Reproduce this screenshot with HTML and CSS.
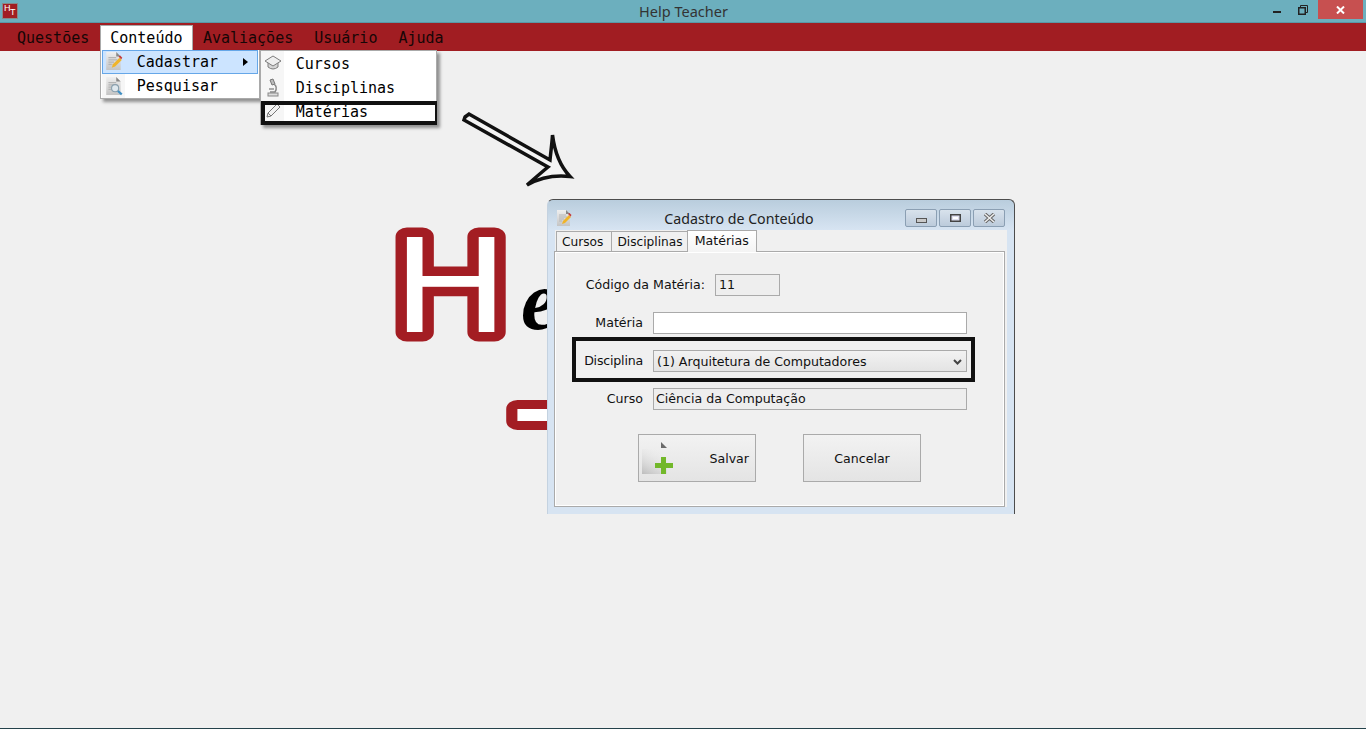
FILE: index.html
```html
<!DOCTYPE html>
<html lang="pt-BR">
<head>
	<meta charset="UTF-8">
	<title>Help Teacher</title>
	<link rel="stylesheet" href="styles.css">
</head>
<body>
	<div class="titlebar">
		<div class="app-icon"><span class="app-h">H</span><span class="app-t">T</span></div>
		<div class="app-title">Help Teacher</div>
		<div class="win-btns">
			<span class="win-btn win-min">
				<svg width="8" height="2"><rect width="8" height="2" fill="#222"/></svg>
			</span>
			<span class="win-btn">
				<svg width="10" height="10" fill="none" stroke="#222"><path d="M2.5 2.5V.5h7v7H7.5"/><rect x=".75" y="2.75" width="6.5" height="6.5" stroke-width="1.5"/></svg>
			</span>
			<span class="win-btn win-close">
				<svg width="9" height="8" stroke="#fff" stroke-width="2"><path d="M1 0.5L8 7.5M8 0.5L1 7.5"/></svg>
			</span>
		</div>
	</div>

	<ul class="menubar">
		<li class="menu-item">Questões</li>
		<li class="menu-item active">Conteúdo
			<ul class="dropdown">
				<li class="drop-item selected">
					<svg class="drop-icon doc-icon" width="20" height="20" viewBox="0 0 18 18"><use href="#doc"/><path d="M7 15l1-3 6-6 2 2-6 6z" fill="#f0b429"/><path d="M13 5l1.500-1 2 2-1 1.500z" fill="#c43c3c"/></svg>
					Cadastrar
					<span class="arrow"></span>
				</li>
				<li class="drop-item">
					<svg class="drop-icon doc-icon" width="20" height="20" viewBox="0 0 18 18"><use href="#doc"/><circle cx="10" cy="11" r="3.200" fill="#dfe8ee" stroke="#8aa0ae"/><path d="M12.500 13.500L16 16.500" stroke="#3f8fc4" stroke-width="2"/></svg>
					Pesquisar
				</li>
				<li class="submenu">
					<ul class="submenu-list">
						<li class="drop-item">
							<svg class="drop-icon" width="18" height="18" viewBox="0 0 18 18"><path d="M4 8v5q5 4 10 0V8z" fill="#d4d4d4" stroke="#7c7c7c"/><path d="M9 2L17 7l-8 5-8-5z" fill="#eee" stroke="#7c7c7c"/></svg>
							Cursos
						</li>
						<li class="drop-item">
							<svg class="drop-icon" width="18" height="20" viewBox="0 0 18 20"><path d="M6 2l3-1 2 5-3 1z" fill="#bbb" stroke="#777"/><path d="M10 6q4 3 1 8H6" fill="none" stroke="#888" stroke-width="1.500"/><rect x="4" y="15" width="10" height="3" fill="#ddd" stroke="#888"/><rect x="5" y="10" width="5" height="2" fill="#aaa"/></svg>
							Disciplinas
						</li>
						<li class="drop-item marked">
							<svg class="drop-icon" width="18" height="18" viewBox="0 0 18 18"><path d="M3 15l1-4L13 2l3 3-9 9z" fill="#f2f2f2" stroke="#777"/><path d="M4 11l3 3" stroke="#777"/></svg>
							Matérias
						</li>
					</ul>
				</li>
			</ul>
		</li>
		<li class="menu-item">Avaliações</li>
		<li class="menu-item">Usuário</li>
		<li class="menu-item">Ajuda</li>
	</ul>

	<div class="stage">
		<svg class="logo" width="170" height="314" viewBox="380 200 170 314">
			<text class="logo-letter" transform="translate(391.500 332) scale(1.2 1)">H</text>
			<text class="logo-e" x="521" y="329">e</text>
			<text class="logo-letter logo-t" transform="translate(518 514) scale(1.25 1)">T</text>
		</svg>

		<svg class="pointer" width="120" height="84" viewBox="460 108 120 84">
			<path d="M465 117L469 114L550 160C551 150 552 143 552.500 135C555 155 561 167 570 176.500C557 175 541 177 527 185C535 178 542 172 548 167L464 120Z" fill="#f4f4f4" stroke="#111" stroke-width="3.500" stroke-linejoin="miter"/>
		</svg>

		<div class="dialog">
			<div class="dialog-head">
				<svg class="dialog-icon" width="18" height="18" viewBox="0 0 18 18"><use href="#doc"/><path d="M7 15l1-3 6-6 2 2-6 6z" fill="#f0b429"/><path d="M13 5l1.500-1 2 2-1 1.500z" fill="#c43c3c"/></svg>
				<div class="dialog-title">Cadastro de Conteúdo</div>
				<div class="dialog-btns">
					<span class="dialog-btn"><svg class="icon-low" width="11" height="5"><rect x=".5" y=".5" width="10" height="4" fill="#c9c9c9" stroke="#555"/></svg></span>
					<span class="dialog-btn"><svg class="icon-high" width="11" height="8"><rect x=".75" y=".75" width="9.500" height="6.500" fill="#dde" stroke="#444" stroke-width="1.500"/><rect x="3" y="3" width="5" height="2" fill="#fff"/></svg></span>
					<span class="dialog-btn"><svg width="13" height="10"><path d="M2 1L11 9M11 1L2 9" stroke="#666" stroke-width="3.500"/><path d="M2 1L11 9M11 1L2 9" stroke="#eee" stroke-width="1.500"/></svg></span>
				</div>
			</div>
			<div class="dialog-body">
				<div class="tabs">
					<span class="tab">Cursos</span>
					<span class="tab">Disciplinas</span>
					<span class="tab current">Matérias</span>
				</div>
				<div class="panel">
					<div class="row">
						<span class="label label-auto">Código da Matéria:</span>
						<span class="field field-code">11</span>
					</div>
					<div class="row">
						<span class="label">Matéria</span>
						<span class="field field-white"></span>
					</div>
					<div class="row row-marked">
						<span class="label">Disciplina</span>
						<span class="field field-select">(1) Arquitetura de Computadores
							<svg class="chevron" width="9" height="6"><path d="M1 1l3.500 3.500L8 1" fill="none" stroke="#444" stroke-width="2"/></svg>
						</span>
					</div>
					<div class="row">
						<span class="label">Curso</span>
						<span class="field field-read">Ciência da Computação</span>
					</div>
					<div class="buttons">
						<button class="btn btn-save">
							<svg class="save-icon" width="32" height="34" viewBox="0 0 32 34">
								<defs><linearGradient id="saveDoc" x1="0" y1="1" x2="0.600" y2="0"><stop offset="0" stop-color="#bdbdbd"/><stop offset="1" stop-color="#ececec" stop-opacity="0"/></linearGradient></defs>
								<path d="M0 33V8h25v25z" fill="url(#saveDoc)"/>
								<path d="M19 1l6 6h-6z" fill="#6a6a6a"/>
								<path d="M19 16h5v6h7v5h-7v6h-5v-6h-6v-5h6z" fill="#72b82a"/>
							</svg>
							Salvar
						</button>
						<button class="btn">Cancelar</button>
					</div>
				</div>
			</div>
		</div>
	</div>

	<svg class="defs" width="0" height="0">
		<defs>
			<linearGradient id="docFill" x1="0" y1="0" x2="0" y2="1"><stop offset="0" stop-color="#efefef"/><stop offset="1" stop-color="#c4c4c4"/></linearGradient>
			<g id="doc">
				<path d="M2 1h9l4 4v12H2z" fill="url(#docFill)"/>
				<path d="M11 1l4 4h-4z" fill="#888"/>
				<path d="M4 6h7M4 8h8M4 10h5M4 12h3" stroke="#b5b5b5"/>
			</g>
		</defs>
	</svg>
</body>
</html>
```
FILE: styles.css
```css
*, *::after{
	margin: 0;
	padding: 0;
	box-sizing: border-box;
}
ul{
	list-style-type: none;
}
html, body{
	height: 100%;
	overflow: hidden;
}
body{
	display: flex;
	flex-direction: column;
	background: #f0f0f0;
	border-bottom: 1px solid #24424b;
	font-family: "DejaVu Sans", sans-serif;
}
.defs{
	position: absolute;
}

/* window title */
.titlebar{
	height: 23px;
	display: flex;
	align-items: flex-start;
	position: relative;
	background: #6cafbe;
	border-bottom: 1px solid #5a98a6;
}
.app-icon{
	width: 16px;
	height: 16px;
	margin: 3px 0 0 2px;
	background: #a11d22;
	border: 1px solid #888;
	position: relative;
	color: #fff;
	font: 9px/9px "Liberation Sans", sans-serif;
}
.app-h{
	position: absolute;
	left: 1px;
	top: 0;
}
.app-t{
	position: absolute;
	left: 7px;
	top: 4px;
}
.app-title{
	flex: 1;
	text-align: center;
	font: 14.5px/23px "Noto Sans", sans-serif;
	color: #333;
	padding-left: 83px;
}
.win-btns{
	display: flex;
	height: 19px;
	margin-right: 3px;
}
.win-btn{
	width: 30px;
	display: flex;
	align-items: center;
	justify-content: center;
}
.win-min{
	width: 22px;
	padding-top: 5px;
}
.win-close{
	width: 45px;
	background: #c75050;
}

/* menu bar */
.menubar{
	height: 28px;
	padding-left: 6.5px;
	display: flex;
	align-items: flex-end;
	background: #a11d22;
	font: 15px/26px "DejaVu Sans Mono", monospace;
	color: #160606;
	position: relative;
	z-index: 5;
}
.menu-item{
	height: 26px;
	padding: 0 9.5px;
	position: relative;
	border: 1px solid transparent;
	border-bottom: 0;
	line-height: 25px;
}
.active{
	margin-right: -0.6px;
	background: #fff;
	border-color: #aaa;
	color: #000;
}
.dropdown{
	position: absolute;
	left: -1px;
	top: 24px;
	width: 160px;
	height: 49px;
	padding-left: 1px;
	background: #fff;
	border: 1px solid #aaa;
	border-top: 0;
	box-shadow: 3px 3px 3px rgba(0,0,0,.4);
}
.drop-item{
	height: 24px;
	padding-left: 35px;
	line-height: 24px;
	position: relative;
	background: linear-gradient(to right, #f6f6f6 23px, #fff 23px);
}
.selected{
	width: 156px;
	background: #cce4ff;
	border: 1px solid #66a7e8;
	padding-left: 34px;
	line-height: 22px;
}
.submenu-list .drop-item{
	padding-top: 1px;
}
.drop-icon{
	position: absolute;
	left: 3px;
	top: 3px;
}
.doc-icon{
	top: 2px;
	left: 2px;
}
.selected .drop-icon{
	left: 1px;
	top: 0;
}
.arrow{
	position: absolute;
	right: 9px;
	top: 7px;
	border-left: 5px solid #000;
	border-top: 4px solid transparent;
	border-bottom: 4px solid transparent;
}
.submenu{
	position: absolute;
	left: 159px;
	top: 0;
}
.submenu-list{
	width: 177px;
	height: 75px;
	background: #fff;
	border: 1px solid #aaa;
	box-shadow: 3px 3px 3px rgba(0,0,0,.4);
}
.marked::after{
	content: "";
	position: absolute;
	left: 0;
	right: -1px;
	top: 2px;
	height: 24px;
	border: 4px solid #111;
	border-right-width: 2px;
}

/* desktop area */
.stage{
	flex: 1;
	position: relative;
}
.logo{
	position: absolute;
	left: 380px;
	top: 149px;
}
.logo-letter{
	font: 131px "DejaVu Sans", sans-serif;
	fill: #fff;
	stroke: #a31d23;
	stroke-width: 19px;
	stroke-linejoin: round;
	paint-order: stroke;
}
.logo-t{
	font-size: 145px;
	stroke-width: 18px;
}
.logo-e{
	font: italic bold 85px "Liberation Serif", serif;
	fill: #000;
}
.pointer{
	position: absolute;
	left: 460px;
	top: 57px;
}

/* child window */
.dialog{
	position: absolute;
	left: 547px;
	top: 148px;
	width: 468px;
	height: 315px;
	padding: 0 7px 7px 7px;
	display: flex;
	flex-direction: column;
	background: linear-gradient(#b9cddd, #d7e4f2 30px);
	border: 1px solid #c4d2e0;
	border-top-color: #4c4c4c;
	border-right-color: #4c4c4c;
	border-bottom: 0;
	border-radius: 6px 6px 0 0;
	font-size: 12.6px;
	color: #111;
}
.dialog-head{
	height: 30px;
	flex: none;
	display: flex;
	align-items: flex-start;
	position: relative;
}
.dialog-icon{
	margin-top: 9px;
}
.dialog-title{
	flex: 1;
	text-align: center;
	font: 14.2px/37px "Noto Sans", sans-serif;
	color: #222;
}
.dialog-btns{
	display: flex;
	gap: 2px;
	margin-top: 9px;
	margin-right: 2px;
}
.dialog-btn{
	width: 32px;
	height: 18px;
	display: flex;
	align-items: center;
	justify-content: center;
	background: linear-gradient(#d8e2ec, #bccbdb);
	border: 1px solid #8b9fb3;
	border-radius: 2px;
}
.icon-low{
	margin-top: 4px;
}
.icon-high{
	margin-top: -1px;
}
.dialog-body{
	flex: 1;
	display: flex;
	flex-direction: column;
	background: #f0f0f0;
}
.tabs{
	height: 21px;
	padding-left: 2px;
	display: flex;
	align-items: flex-end;
	position: relative;
	z-index: 1;
	margin-left: -1px;
}
.tab{
	height: 20px;
	padding: 0 5px;
	font-size: 12.2px;
	line-height: 21px;
	background: #f0f0f0;
	border: 1px solid #aaa;
	border-bottom: 0;
	margin-right: -1px;
	margin-top: 2px;
}
.tab:first-child{
	padding-right: 8px;
}
.tab:nth-child(2){
	padding-right: 4px;
}
.current{
	height: 22px;
	padding: 0 7px;
	margin-bottom: -1px;
	font-size: 12.6px;
	line-height: 20px;
	background: linear-gradient(#fff, #f4f4f4);
	z-index: 2;
}
.panel{
	flex: 1;
	margin: 0 2px 0 -1px;
	padding: 22px 0 0 30px;
	display: flex;
	flex-direction: column;
	gap: 16px;
	border: 1px solid #aaa;
	box-shadow: inset 0 0 0 1px #fff;
}
.row{
	width: 382px;
	height: 22px;
	display: flex;
	align-items: center;
	gap: 10px;
	position: relative;
}
.row-marked::after{
	content: "";
	position: absolute;
	left: -13px;
	top: -13px;
	width: 403px;
	height: 45px;
	border: 4px solid #111;
}
.row-marked .label{
	letter-spacing: -0.2px;
}
.label{
	width: 58px;
	display: flex;
	justify-content: flex-end;
	padding-bottom: 2px;
	white-space: nowrap;
}
.label-auto{
	width: 120px;
}
.field{
	flex: 1;
	height: 22px;
	padding-left: 3px;
	line-height: 20px;
	background: #eee;
	border: 1px solid #aaa;
	white-space: nowrap;
}
.field-code{
	flex: none;
	width: 65px;
}
.field-white{
	background: #fff;
}
.field-read{
	padding-left: 2px;
}
.field-select{
	display: flex;
	align-items: center;
	justify-content: space-between;
	padding: 1px 4px 0 3px;
	background: linear-gradient(#f2f2f2, #e4e4e4);
}
.buttons{
	margin-top: 8px;
	padding-left: 53px;
	display: flex;
	gap: 47px;
}
.btn{
	width: 118px;
	height: 48px;
	font: inherit;
	color: inherit;
	background: linear-gradient(#f2f2f2, #e4e4e4);
	border: 1px solid #aaa;
}
.btn-save{
	display: flex;
	align-items: center;
	justify-content: space-between;
	padding: 0 6px 0 3px;
}
```
